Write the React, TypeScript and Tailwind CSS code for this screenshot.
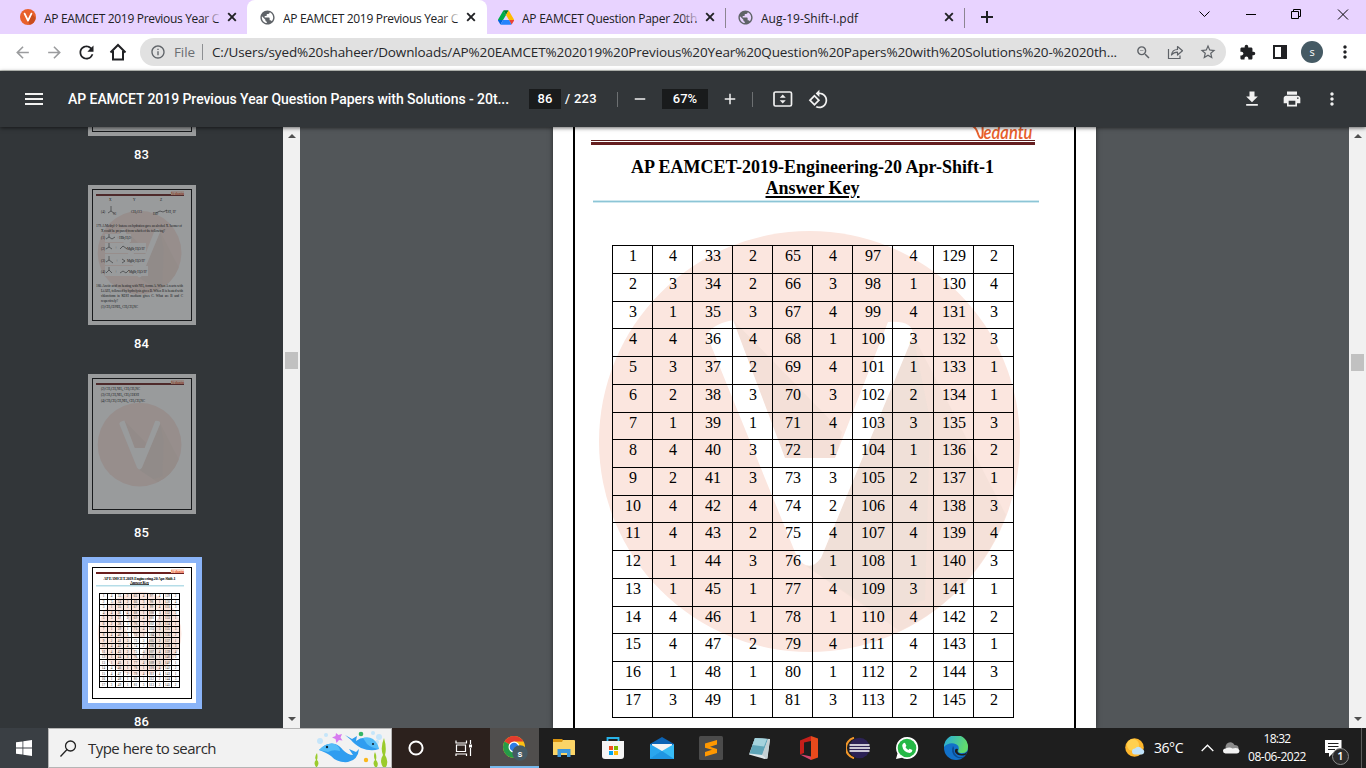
import React, { useLayoutEffect, useRef, useState } from "react";
import {
  MdArrowBack, MdArrowForward, MdRefresh, MdPublic, MdInfoOutline, MdStarBorder,
  MdExtension, MdMoreVert, MdMenu, MdRemove, MdAdd, MdFileDownload, MdPrint, MdZoomOut,
} from "react-icons/md";

/** One line of text whose letter spacing is adjusted so that it fills the given width. */
function Fit({ width, className = "", children }: { width: number; className?: string; children: string }) {
  const ref = useRef<HTMLSpanElement>(null);
  const [spacing, setSpacing] = useState(0);
  useLayoutEffect(() => {
    if (ref.current) {
      const natural = ref.current.getBoundingClientRect().width;
      setSpacing((width - natural) / children.length);
    }
  }, [width, children]);
  return (
    <span ref={ref} className={"inline-block shrink-0 whitespace-pre " + className} style={{ letterSpacing: spacing }}>
      {children}
    </span>
  );
}

const ui = "font-['Open_Sans','Noto_Sans',sans-serif]";

function DriveIcon() {
  return (
    <svg width="16" height="15" viewBox="0 0 87 78">
      <path fill="#0066da" d="m6.6 66.85 3.85 6.65c.8 1.4 1.95 2.5 3.3 3.3l13.75-23.8h-27.5c0 1.55.4 3.1 1.2 4.5z" />
      <path fill="#00ac47" d="m43.65 25-13.75-23.8c-1.35.8-2.5 1.9-3.3 3.3l-25.4 44a9.06 9.06 0 0 0 -1.2 4.5h27.5z" />
      <path fill="#ea4335" d="m73.55 76.8c1.35-.8 2.5-1.9 3.3-3.3l1.6-2.75 7.65-13.25c.8-1.4 1.2-2.95 1.2-4.5h-27.5l5.85 11.5z" />
      <path fill="#00832d" d="m43.65 25 13.75-23.8c-1.35-.8-2.9-1.2-4.5-1.2h-18.5c-1.6 0-3.15.45-4.5 1.2z" />
      <path fill="#2684fc" d="m59.8 53h-32.3l-13.75 23.8c1.35.8 2.9 1.2 4.5 1.2h50.8c1.6 0 3.15-.45 4.5-1.2z" />
      <path fill="#ffba00" d="m73.4 26.5-12.7-22c-.8-1.4-1.95-2.5-3.3-3.3l-13.75 23.8 16.15 28h27.45c0-1.55-.4-3.1-1.2-4.5z" />
    </svg>
  );
}

function VIcon() {
  return (
    <svg width="16" height="16" viewBox="0 0 16 16">
      <circle cx="8" cy="8" r="8" fill="#e8602c" />
      <path d="M8 12.5 L12 5 L15.6 9 A8 8 0 0 1 9.5 15.8z" fill="#c94d1e" />
      <path d="M4.6 4.6 L8 11.6 L11.4 4.6" stroke="#fff" strokeWidth="1.8" fill="none" strokeLinecap="round" strokeLinejoin="round" />
    </svg>
  );
}

function Tab({ icon, title, width, fade, className }: { icon: React.ReactNode; title: string; width: number; fade?: string; className: string }) {
  return (
    <div className={"relative flex h-[34px] shrink-0 items-center pl-3 " + className}>
      <span className="flex w-4 shrink-0 justify-center">{icon}</span>
      <div className="relative ml-2 w-[178px] overflow-hidden">
        <Fit width={width} className="text-[12px] leading-4 text-[#202124]">{title}</Fit>
        {fade && <div className={"absolute top-0 left-[158px] h-4 w-5 bg-gradient-to-r " + fade} />}
      </div>
      <svg className="ml-[5px] shrink-0" width="10" height="10" viewBox="0 0 10 10" fill="none" stroke="#202124" strokeWidth="1.9"><path d="M1.200 1.200L8.800 8.800M8.800 1.200L1.200 8.800" /></svg>
    </div>
  );
}

function TabStrip() {
  return (
    <div className="flex h-[34px] shrink-0 bg-[#e8d3ff]">
      <Tab icon={<VIcon />} title="AP EAMCET 2019 Previous Year C" width={175} fade="from-transparent to-[#e8d3ff]" className="ml-2 w-[239px]" />
      <Tab icon={<MdPublic size={17} className="shrink-0 text-[#5f6368]" />} title="AP EAMCET 2019 Previous Year C" width={175} fade="from-transparent to-white" className="w-[240px] rounded-t-lg bg-white" />
      <Tab icon={<DriveIcon />} title="AP EAMCET Question Paper 20th" width={175} fade="from-transparent to-[#e8d3ff]" className="ml-[-1px] w-[239px]" />
      <div className="mt-2 h-5 w-px bg-[#8c8591]" />
      <Tab icon={<MdPublic size={17} className="shrink-0 text-[#5f6368]" />} title="Aug-19-Shift-I.pdf" width={97} className="ml-[-1px] w-[239px]" />
      <div className="mt-2 h-5 w-px bg-[#8c8591]" />
      <svg className="mt-[11px] ml-[16px] shrink-0" width="12" height="12" viewBox="0 0 12 12"><path d="M5 0h2v5h5v2H7v5H5V7H0V5h5z" fill="#202124" /></svg>
      <svg className="ml-[203px] shrink-0" width="166" height="34" viewBox="0 0 166 34" fill="none" stroke="#000" strokeWidth="1">
        <path d="M3.5 11.5 l5 5 l5 -5" />
        <path d="M50 14.500h10" />
        <path d="M95.500 11.500h7v7h-7z M97.500 11v-1.500h7v7h-2" />
        <path d="M142 9.500l10 10M152 9.500l-10 10" />
      </svg>
    </div>
  );
}

function AddressBar() {
  return (
    <div className="flex h-[37px] shrink-0 items-center border-b border-[#c9ccc6] bg-white pl-[13px]">
      <MdArrowBack size={19} className="text-[#9b9c9e]" />
      <MdArrowForward size={19} className="ml-[13px] text-[#9b9c9e]" />
      <MdRefresh size={21} className="ml-[12px] text-[#202124]" />
      <svg className="ml-[11px]" width="20" height="20" viewBox="0 0 20 20" fill="none" stroke="#202124" strokeWidth="2">
        <path d="M2.500 10.500 L10 3 L17.500 10.500 M5 9v8.500h10V9" />
      </svg>
      <div className="ml-[12px] flex h-7 w-[1086px] items-center rounded-full bg-[#e1e1e1] pl-[10px]">
        <MdInfoOutline size={16} className="text-[#5f6368]" />
        <Fit width={21} className="ml-[8px] text-[13.500px] leading-5 text-[#6b6e72]">File</Fit>
        <div className="ml-[7px] h-4 w-px bg-[#8d8f92]" />
        <Fit width={905} className="ml-[9px] text-[13.500px] leading-5 text-[#26272a]">
          C:/Users/syed%20shaheer/Downloads/AP%20EAMCET%202019%20Previous%20Year%20Question%20Papers%20with%20Solutions%20-%2020th...
        </Fit>
        <MdZoomOut size={17} className="ml-[18px] shrink-0 text-[#5f6368]" />
        <svg className="ml-[15px] shrink-0" width="17" height="16" viewBox="0 0 17 16" fill="none" stroke="#5f6368" strokeWidth="1.200">
          <path d="M1.500 5v9.500h11.500v-3" />
          <path d="M4.500 11c.5-4 3-5.500 6-5.500V2.500L15.500 6.700L10.500 11V8.200C8 8.200 6 9 4.500 11z" strokeLinejoin="round" />
        </svg>
        <MdStarBorder size={18} className="ml-[15px] shrink-0 text-[#5f6368]" />
      </div>
      <MdExtension size={17} className="ml-[13px] text-[#202124]" />
      <svg className="ml-[17px]" width="14" height="14" viewBox="0 0 14 14"><path fillRule="evenodd" fill="#202124" d="M0 0h14v14H0z M2 2v10h6V2z" /></svg>
      <div className="ml-[14px] flex size-[22px] items-center justify-center rounded-full bg-[#455a64] text-[11px] font-medium text-white">s</div>
      <MdMoreVert size={20} className="ml-[12px] text-[#202124]" />
    </div>
  );
}

function PdfToolbar() {
  return (
    <div className="relative z-10 flex h-14 shrink-0 items-center bg-[#323639] pl-[22px] font-[Roboto,sans-serif] text-[#f1f1f1] shadow-[0_1px_4px_rgba(0,0,0,0.6)]">
      <MdMenu size={24} />
      <Fit width={441} className="ml-[22px] text-[14px] font-medium text-white">AP EAMCET 2019 Previous Year Question Papers with Solutions - 20t...</Fit>
      <div className="ml-[20px] flex h-5 w-8 items-center justify-center bg-[#191b1c] text-[13px] font-medium text-white">86</div>
      <Fit width={32} className="ml-[4px] text-[13px] font-medium text-white">/ 223</Fit>
      <div className="ml-[20px] h-[15px] w-px bg-[#6d7072]" />
      <MdRemove size={18} className="ml-[13px]" />
      <div className="ml-[13px] flex h-5 w-[46px] items-center justify-center bg-[#191b1c] text-[13px] font-medium text-white">67%</div>
      <MdAdd size={18} className="ml-[13px]" />
      <div className="ml-[13px] h-[15px] w-px bg-[#6d7072]" />
      <svg className="ml-[20px]" width="20" height="18" viewBox="0 0 20 18">
        <rect x="1" y="2" width="17.500" height="14" rx="1.500" fill="none" stroke="#f1f1f1" strokeWidth="1.700" />
        <path d="M9.750 4.500l3 3.200h-6z M9.750 13.500l3-3.200h-6z" fill="#f1f1f1" />
      </svg>
      <svg className="ml-[15px]" width="21" height="21" viewBox="0 0 24 24" fill="#f1f1f1">
        <path d="M7.340 6.410L.86 12.900l6.490 6.480 6.490-6.480-6.500-6.490zM3.690 12.900l3.660-3.660L11 12.900l-3.660 3.660-3.650-3.660zm15.670-6.260C17.610 4.880 15.300 4 13 4V.76L8.760 5 13 9.240V6c1.790 0 3.580.68 4.950 2.050 2.730 2.730 2.730 7.170 0 9.900C16.580 19.320 14.790 20 13 20c-.97 0-1.940-.21-2.840-.61l-1.490 1.490C10.020 21.620 11.510 22 13 22c2.300 0 4.610-.88 6.360-2.640 3.520-3.510 3.520-9.210 0-12.720z" />
      </svg>
      <div className="mr-[24px] ml-auto flex items-center gap-5">
        <MdFileDownload size={20} />
        <MdPrint size={20} />
        <MdMoreVert size={20} />
      </div>
    </div>
  );
}

function Watermark() {
  return (
    <g>
      <circle cx="809.500" cy="441.500" r="210.500" fill="#fbe6df" />
      <path d="M733 320 L842 432 L836 458 L785 460z" fill="#f4e0d8" />
      <path d="M913 335 L1006 515 A210 210 0 0 1 900 631 L806 566 L822 556z" fill="#f5e1d9" />
      <path d="M913 335 L930 420 L925 600 L880 615 L808 567 L822 556z" fill="#eddfd7" opacity="0.600" />
      <path d="M708 338 Q706 326 733 320 L785 458 H835 L888 322 Q914 320 913 336 L821 558 Q809 574 797 557z" fill="#fff" />
    </g>
  );
}

function ThumbFrame({ children, mark, logo = true }: { children?: React.ReactNode; mark: string; logo?: boolean }) {
  return (
    <svg width="108" height="140" viewBox="0 0 108 140" className="block bg-white font-['Liberation_Serif',serif]" fill="#000">
      <g transform={mark}><Watermark /></g>
      <rect x="4.500" y="4.500" width="99" height="131" fill="none" stroke="#000" />
      <rect x="8" y="9" width="88" height="2" fill="#6b1f1f" />
      {logo && (
        <g>
          <rect x="83" y="6" width="13" height="4" fill="#fbd9cb" />
          <text x="83" y="10" fontSize="5" fill="#e8602c" textLength="13" fontWeight="bold" lengthAdjust="spacingAndGlyphs">Vedantu</text>
        </g>
      )}
      {children}
    </svg>
  );
}

const answers = [
  ["1", "4", "33", "2", "65", "4", "97", "4", "129", "2"],
  ["2", "3", "34", "2", "66", "3", "98", "1", "130", "4"],
  ["3", "1", "35", "3", "67", "4", "99", "4", "131", "3"],
  ["4", "4", "36", "4", "68", "1", "100", "3", "132", "3"],
  ["5", "3", "37", "2", "69", "4", "101", "1", "133", "1"],
  ["6", "2", "38", "3", "70", "3", "102", "2", "134", "1"],
  ["7", "1", "39", "1", "71", "4", "103", "3", "135", "3"],
  ["8", "4", "40", "3", "72", "1", "104", "1", "136", "2"],
  ["9", "2", "41", "3", "73", "3", "105", "2", "137", "1"],
  ["10", "4", "42", "4", "74", "2", "106", "4", "138", "3"],
  ["11", "4", "43", "2", "75", "4", "107", "4", "139", "4"],
  ["12", "1", "44", "3", "76", "1", "108", "1", "140", "3"],
  ["13", "1", "45", "1", "77", "4", "109", "3", "141", "1"],
  ["14", "4", "46", "1", "78", "1", "110", "4", "142", "2"],
  ["15", "4", "47", "2", "79", "4", "111", "4", "143", "1"],
  ["16", "1", "48", "1", "80", "1", "112", "2", "144", "3"],
  ["17", "3", "49", "1", "81", "3", "113", "2", "145", "2"],
];
const shortRows = [2, 6, 9, 13];

const markLow = "translate(-109.500 -20.200) scale(0.199)";
const markMid = "translate(-109.500 -17.200) scale(0.199)";

function Thumb84() {
  return (
    <ThumbFrame mark={markLow}>
      <g fontSize="3.500">
        <text x="21" y="16">X</text><text x="45" y="16">Y</text><text x="72" y="16">Z</text>
        <text x="13" y="28">(4)</text><text x="43" y="28" textLength="11">CH₃CCl</text><text x="65" y="30">HO</text><text x="78" y="27.500">OH, H⁺</text><text x="25" y="30">Cl</text>
        <path d="M23 21v5l-3 2m3-2l4 3M68 28l4-2 3 1 4-2" fill="none" stroke="#222" strokeWidth="0.600" />
        <text x="8" y="42" textLength="86">179. A Methyl-1- butene on hydration gave an alcohol X. Isomer of</text>
        <text x="13" y="47" textLength="64">X could be prepared from which of the following?</text>
      </g>
      <rect x="17" y="49" width="26" height="8" fill="#fff" />
      <rect x="17" y="58" width="41" height="10" fill="#fff" />
      <rect x="17" y="69" width="41" height="11" fill="#fff" />
      <rect x="17" y="81" width="43" height="10" fill="#fff" />
      <path d="M18 54l3-2 3 2 3-2M21 52v-3M18 64l3-2 3 2M21 62v-4M32 64l3-3 4 3M18 77l3-2 4 3M21 75v-4M34 74l3 2-3 2M18 88l3-3 3 3M21 85v-3M32 88l3-2 3 2 3-3" fill="none" stroke="#222" strokeWidth="0.600" />
      <g fontSize="3.500">
        <text x="13" y="54">(1)</text><text x="29" y="54" textLength="14">+ HBr, H₂O</text>
        <text x="13" y="65">(2)</text><text x="27" y="64">+</text><text x="39" y="65" textLength="18">MgBr, H₂O/ H⁺</text>
        <text x="13" y="77">(3)</text><text x="28" y="77">+</text><text x="39" y="77" textLength="18">MgBr, H₂O/ H⁺</text>
        <text x="13" y="88">(4)</text><text x="27" y="88">+</text><text x="41" y="88" textLength="18">MgBr, H₂O/ H⁺</text>
        <text x="8" y="101.500" textLength="87">180. Acetic acid on heating with NH₃ forms A. When A reacts with</text>
        <text x="13" y="106.500" textLength="82">LiAlH₄ followed by hydrolysis gives B. When B is heated with</text>
        <text x="13" y="112" textLength="82" wordSpacing="1">chloroform in KOH medium gives C. What are B and C</text>
        <text x="13" y="117" textLength="17">respectively?</text>
        <text x="13" y="123" textLength="37">(1) CH₃CONH₂, CH₃CH₂NC</text>
      </g>
    </ThumbFrame>
  );
}

function Thumb85() {
  return (
    <ThumbFrame mark={markMid}>
      <g fontSize="3.500">
        <text x="13" y="16" textLength="39">(2) CH₃CH₂NH₂, CH₃CH₂NC</text>
        <text x="13" y="22" textLength="38">(3) CH₃CH₂NH₂, CH₃COOH</text>
        <text x="13" y="28" textLength="44">(4) CH₃CH₂CH₂NH₂, CH₃CH₂NC</text>
      </g>
    </ThumbFrame>
  );
}

function Thumb86() {
  return (
    <ThumbFrame mark={markMid}>
      <g fontSize="4" fontWeight="bold">
        <text x="15.500" y="16.500" textLength="72">AP EAMCET-2019-Engineering-20 Apr-Shift-1</text>
        <text x="42" y="20.500" textLength="19">Answer Key</text>
      </g>
      <rect x="42" y="21" width="19" height="0.700" />
      <rect x="8" y="22" width="88" height="1.500" fill="#b5dde8" />
      {answers.map((row, r) => row.map((v, c) => (
        <text key={r + "-" + c} x={15.5 + c * 8} y={34.3 + r * 5.53} fontSize="3.300" fill="#333" textAnchor="middle">{v}</text>
      )))}
      {Array.from({ length: 18 }, (_, i) => <rect key={i} x="11" y={Math.round(30 + i * 5.53)} width="81" height="1" />)}
      {Array.from({ length: 11 }, (_, i) => <rect key={i} x={11 + i * 8} y="30" width="1" height="95" />)}
    </ThumbFrame>
  );
}

function Scrollbar({ handle }: { handle: string }) {
  return (
    <div className="flex w-[17px] shrink-0 flex-col items-center bg-[#f1f1f1]">
      <svg className="mt-[5px] shrink-0" width="8" height="6" viewBox="0 0 8 6"><path d="M0 6 L4 2 L8 6z" fill="#505050" /></svg>
      <div className={"w-[13px] shrink-0 bg-[#c1c1c1] " + handle} />
      <svg className="mt-auto mb-[6px] shrink-0" width="8" height="6" viewBox="0 0 8 6"><path d="M0 1 L4 5 L8 1z" fill="#505050" /></svg>
    </div>
  );
}

function ThumbItem({ label, selected, children }: { label: string; selected?: boolean; children?: React.ReactNode }) {
  return (
    <div className="flex h-[189px] shrink-0 flex-col items-center">
      {selected
        ? <div className="z-10 -mt-[6px] border-[6px] border-[#8ab4f8]">{children}</div>
        : <div className="opacity-50">{children}</div>}
      <div className={"text-[13px] leading-4 font-medium text-white " + (selected ? "mt-[5px]" : "mt-[11px]")}>{label}</div>
    </div>
  );
}

function Sidebar() {
  return (
    <div className="flex w-[283px] shrink-0 flex-col overflow-hidden bg-[#323639] font-[Roboto,sans-serif]">
      <div className="-mt-[131px] flex flex-col">
        <ThumbItem label="83"><ThumbFrame mark={markMid} logo={false} /></ThumbItem>
        <ThumbItem label="84"><Thumb84 /></ThumbItem>
        <ThumbItem label="85"><Thumb85 /></ThumbItem>
        <ThumbItem label="86" selected><Thumb86 /></ThumbItem>
      </div>
    </div>
  );
}

function DocumentPage() {
  return (
    <div className="relative h-[601px] w-[543px] overflow-hidden bg-white px-5 font-['Liberation_Serif',serif] text-black shadow-[0_0_5px_rgba(0,0,0,0.500)]">
      <svg className="absolute top-0 left-0" width="543" height="601" viewBox="553 127 543 601">
        <Watermark />
      </svg>
      <div className="relative flex h-full flex-col border-x-2 border-black">
        <svg className="ml-[396px] block h-[13px] w-[66px] shrink-0" viewBox="0 0 66 13">
          <text x="12.500" y="12" fontSize="20" textLength="49" lengthAdjust="spacingAndGlyphs" fill="#e8602c" fontFamily="Lato" fontStyle="italic" fontWeight="600">edantu</text>
          <path d="M1.500 -1 Q5 0 7.500 8 Q9 12 11 10.500 Q12 9 11.500 -1" fill="none" stroke="#e8602c" strokeWidth="2" />
        </svg>
        <div className="ml-4 h-px w-[444px] shrink-0 bg-[#5e1d1d]" />
        <div className="mt-px ml-4 h-[3px] w-[444px] shrink-0 bg-[#651f20]" />
        <div className="mt-[12px] ml-[56px] flex w-[363px] shrink-0 flex-col items-center text-[18px] leading-[21px] font-bold">
          <Fit width={363}>AP EAMCET-2019-Engineering-20 Apr-Shift-1</Fit>
          <Fit width={94} className="underline decoration-2 underline-offset-2">Answer Key</Fit>
        </div>
        <div className="mt-[1px] ml-[18px] h-[3px] w-[446px] shrink-0 border-y border-[#cfe8ef] bg-[#8cc5d6]" />
        <div className="mt-[42px] ml-[37px] w-[402px] shrink-0 border-t border-l border-black">
          {answers.map((row, r) => (
            <div key={r} className={"flex " + (shortRows.includes(r) ? "h-[27px]" : "h-7")}>
              {row.map((v, c) => (
                <div key={c} className={"box-border border-r border-b border-black pl-px text-center text-[16px] leading-[20px] " + (c === 7 ? "w-[41px]" : "w-[40px]")}>{v}</div>
              ))}
            </div>
          ))}
        </div>
      </div>
    </div>
  );
}

function Dolphins() {
  return (
    <svg width="78" height="38" viewBox="0 0 78 38">
      <g fill="#c5e5fa"><circle cx="7" cy="12" r="3" /><circle cx="13" cy="6" r="2" /><circle cx="60" cy="4" r="2" /><circle cx="66" cy="8" r="3" /><circle cx="64" cy="13" r="2" /></g>
      <path d="M23 4l2.500 2 3.500-1-1.500 3.500 2 3-3.500-.500-2.500 3-1-4-3.500-1.500 3.500-1.500z" fill="#d77bf0" />
      <circle cx="48" cy="5" r="2.300" fill="#35b566" />
      <circle cx="53" cy="31" r="2.200" fill="#fbb81c" />
      <path d="M6 21 Q14 13 22 15 Q26 16 30 21 Q35 26 40 26 L36 20 L43 23 L46 20 Q45 31 35 33 Q24 34 18 27 Q14 24 6 21z" fill="#2f9df0" />
      <path d="M6 21 Q14 13 22 15 Q27 18 27 22 Q20 20 15 23z" fill="#55bdf8" />
      <path d="M32 6l7 4 5-3 -1 5 Q48 8 54 9 Q62 11 66 20 Q58 23 48 19 Q41 15 38 11z" fill="#2f9df0" />
      <path d="M50 9q5-2 10 1 5 4 6 10-8-1-12-5z" fill="#55bdf8" />
      <circle cx="14" cy="18" r="1.200" fill="#123" /><circle cx="60" cy="15" r="1.100" fill="#123" />
      <path d="M3 38q-3-4 0-7 -2-3 1-7 1 4 0 7 3 3 0 7zM62 38q-3-4 0-7-2-4 0-8 2 4 1 8 3 3 1 7zM70 38q-4-6 0-12-3-7 1-17 3 10 1 17 4 6 1 12z" fill="#9acb2c" />
    </svg>
  );
}

function TaskIcon({ children, active }: { children: React.ReactNode; active?: boolean }) {
  return (
    <div className={"flex h-10 w-[49px] shrink-0 items-center justify-center " + (active ? "border-b-2 border-[#76b9ed] bg-[#504e4d] pt-0.5" : "")}>{children}</div>
  );
}

function Taskbar() {
  return (
    <div className={"flex h-10 shrink-0 items-center bg-[#1e1e1e] text-white " + ui}>
      <div className="flex h-10 w-12 items-center justify-center bg-[#3a3f44]">
        <svg width="16" height="16" viewBox="0 0 16 16" fill="#fff"><path d="M0 2.300L6.500 1.400V7.600H0zM7.300 1.300L16 0V7.600H7.300zM0 8.400H6.500V14.600L0 13.700zM7.300 8.400H16V16L7.300 14.700z" /></svg>
      </div>
      <div className="flex h-10 w-[344px] items-center border border-[#b5b5b5] bg-[#f2f2f2] pl-[11px]">
        <svg width="17" height="17" viewBox="0 0 17 17" fill="none" stroke="#222" strokeWidth="1.300"><circle cx="10.500" cy="6" r="5" /><path d="M7 9.500L.5 16.500" /></svg>
        <Fit width={128} className="ml-[11px] text-[15px] leading-5 text-[#2c2c2c]">Type here to search</Fit>
        <div className="ml-auto"><Dolphins /></div>
      </div>
      <div className="flex h-10 w-[98px] items-center bg-[#2c211d]">
        <svg className="ml-4" width="16" height="16" viewBox="0 0 16 16"><circle cx="8" cy="8" r="6.600" fill="none" stroke="#fff" strokeWidth="2" /></svg>
        <svg className="ml-[31px]" width="18" height="16" viewBox="0 0 18 16" fill="none" stroke="#fff" strokeWidth="1.200"><path d="M1.500 5h9v6.500h-9zM1 .5V3h10.500V.5M1 16v-2h10.500V16M15.500 0v4M15.500 8v8" /><path d="M14 4.500h3v3h-3z" fill="#fff" stroke="none" /></svg>
      </div>
      <TaskIcon active>
        <svg width="26" height="26" viewBox="0 0 26 26">
          <circle cx="12" cy="12" r="11" fill="#fbc116" />
          <path d="M12 12L2.500 6.500A11 11 0 0 1 21.500 6.500H12z" fill="#e33b2e" />
          <path d="M12 12L2.500 6.500A11 11 0 0 0 12 23L17 14.500z" fill="#259b48" />
          <circle cx="12" cy="12" r="5.500" fill="#fff" /><circle cx="12" cy="12" r="4.300" fill="#2c7ce5" />
          <circle cx="18" cy="18" r="7.700" fill="#455a64" />
          <text x="18" y="21.500" fontSize="9.500" fontFamily="Roboto" fontWeight="500" textAnchor="middle" fill="#fff">s</text>
        </svg>
      </TaskIcon>
      <TaskIcon>
        <svg width="22" height="20" viewBox="0 0 22 20"><path d="M0 1h9l2 2v4H0z" fill="#d99410" /><path d="M0 4h9l1-2h11a1 1 0 0 1 1 1v14H0z" fill="#fbd467" /><path d="M4.500 19v-8h13v8h-3.500v-4h-6v4z" fill="#3e97dc" /></svg>
      </TaskIcon>
      <TaskIcon>
        <svg width="24" height="24" viewBox="0 0 24 24"><path d="M6.500 6V2h11v4" fill="none" stroke="#28b3e8" strokeWidth="1.800" /><path d="M1 5h22v15a3 3 0 0 1-3 3H4a3 3 0 0 1-3-3z" fill="#f5f5f5" /><path d="M8 10h4v4H8z" fill="#f05022" /><path d="M13 10h4v4h-4z" fill="#7fba00" /><path d="M8 15h4v4H8z" fill="#00a4ef" /><path d="M13 15h4v4h-4z" fill="#ffb900" /></svg>
      </TaskIcon>
      <TaskIcon>
        <svg width="24" height="22" viewBox="0 0 24 22"><path d="M0 7L12 0l12 7v15H0z" fill="#0c63b4" /><path d="M2 7h20v7H2z" fill="#f4f4f4" /><path d="M0 7l12 7L0 22z" fill="#2aa6ee" /><path d="M24 7v15H0l12-8z" fill="#38bcf5" /><path d="M24 22H0l12-8z" fill="#1f96e3" /></svg>
      </TaskIcon>
      <TaskIcon>
        <svg width="24" height="24" viewBox="0 0 24 24"><rect width="24" height="24" rx="1.500" fill="#4b4b4b" /><path d="M6 7.500L18 4v4.500L11 10.700L18 13v4L6 20.500V16l7-2.200L6 11.700z" fill="#ff9800" /></svg>
      </TaskIcon>
      <TaskIcon>
        <svg width="24" height="24" viewBox="0 0 24 24"><path d="M7 2l15 1-2.500 19.500-3 .500L1 18.500z" fill="#dfe7ea" /><path d="M7 2l13 1-5.500 16L1.500 17.500z" fill="#5fa5b8" /><path d="M7 2l12 1-3 7.500L4.500 9z" fill="#a5d3dd" /><path d="M20 3l2 1-3 19-5-4z" fill="#c3d0d4" /></svg>
      </TaskIcon>
      <TaskIcon>
        <svg width="20" height="24" viewBox="0 0 20 24"><path d="M12 0l7 2.500v19L12 24z" fill="#e84a1c" /><path d="M12 0L1 4.500v14L5 17V6.500L12 5z" fill="#c51f1a" /><path d="M1 18.500L12 24v-3.500L5 19z" fill="#d4436b" /></svg>
      </TaskIcon>
      <TaskIcon>
        <svg width="24" height="22" viewBox="0 0 24 22"><path d="M8 0.800A10.500 10.500 0 0 0 8 21.200" fill="none" stroke="#f4982a" strokeWidth="2" /><circle cx="13.500" cy="11" r="10.300" fill="#2c2255" /><path d="M3.500 8h20M3.500 11h20.500M3.500 14h20" stroke="#fff" strokeWidth="1.500" /></svg>
      </TaskIcon>
      <TaskIcon>
        <div className="relative flex size-6 items-center justify-center">
          <svg className="absolute inset-0" width="24" height="24" viewBox="0 0 24 24"><path d="M12 1A11 11 0 1 1 7 21.700L1 23L2.500 17.500A11 11 0 0 1 12 1z" fill="#fff" /><circle cx="12" cy="12" r="9.300" fill="#25b846" /></svg>
          <svg className="relative" width="14" height="14" viewBox="0 0 14 14"><path d="M3.500 2.200l1.400-.4 1.500 3-.9 1.400q1 1.900 2.900 2.700l1.200-1.200 2.800 1.400q0 2.500-2.600 2.800Q3 11 2.200 4.700q.2-1.700 1.300-2.500z" fill="#fff" /></svg>
        </div>
      </TaskIcon>
      <TaskIcon>
        <svg width="24" height="24" viewBox="0 0 24 24">
          <defs><linearGradient id="edge" x1="0" y1="0" x2="1" y2="0.300"><stop offset="0" stopColor="#25a9e0" /><stop offset="1" stopColor="#62dc6c" /></linearGradient></defs>
          <circle cx="12" cy="12" r="12" fill="#1271c9" />
          <path d="M0 11A12 12 0 0 1 24 11Q24 17 18 17Q13 17 14.500 14Q16 9 10 7.500Q4 6.500 0 11z" fill="url(#edge)" />
          <path d="M9 10Q6 17 12 21Q17 24 21 20Q15 23 12 19Q9 16 10 12z" fill="#0b4a91" />
          <path d="M14 13Q12 17 17 18Q21 18.500 23.500 15.500L21.500 19Q14 21 11 16Q10.500 12 14 13z" fill="#1e1e1e" />
        </svg>
      </TaskIcon>
      <svg className="ml-[145px] shrink-0" width="20" height="20" viewBox="0 0 20 20"><circle cx="9.500" cy="9.500" r="9.300" fill="#fdb62c" /><circle cx="8" cy="7" r="6" fill="#ffd050" /><path d="M10 16.500a3 3 0 0 1 0-6 4 4 0 0 1 7 .500 2.800 2.800 0 0 1 0 5.500z" fill="#c0e2fa" /></svg>
      <Fit width={29} className="ml-[9px] text-[14px] leading-5">36°C</Fit>
      <svg className="ml-[18px] shrink-0" width="13" height="8" viewBox="0 0 13 8" fill="none" stroke="#fff" strokeWidth="1.300"><path d="M.7 7L6.500 1.200L12.300 7" /></svg>
      <svg className="ml-[9px] shrink-0" width="17" height="12" viewBox="0 0 17 12"><path d="M3 7a4.500 4.500 0 0 1 8.500-4q4.500 0 4 4z" fill="#8b8b8b" /><path d="M2.500 11.500a2.500 2.500 0 0 1 0-5q4-2 7 0 6-1.500 7 2 0 3-3 3z" fill="#f2f2f2" /></svg>
      <div className="ml-[7px] flex w-[60px] shrink-0 flex-col items-center text-[12px] leading-[18px]">
        <Fit width={27}>18:32</Fit>
        <Fit width={58}>08-06-2022</Fit>
      </div>
      <div className="relative mt-[7px] ml-[18px] h-6 w-6 shrink-0">
        <svg width="17" height="18" viewBox="0 0 17 18"><path d="M0 0h16.500v13H8l-4 4v-4H0z" fill="#fff" /><path d="M3 3.500h10.500M3 6.500h10.500M3 9.500h7" stroke="#1e1e1e" /></svg>
        <div className="absolute top-[8px] left-[7px] flex size-[17px] items-center justify-center rounded-full border border-[#8b8b8b] bg-[#2b2b2b] text-[11px] font-semibold">1</div>
      </div>
      <div className="mr-[4px] ml-auto h-10 w-px bg-[#5c5c5c]" />
    </div>
  );
}

export default function App() {
  return (
    <div className={"flex h-[768px] w-[1366px] flex-col overflow-hidden bg-white " + ui}>
      <TabStrip />
      <AddressBar />
      <PdfToolbar />
      <div className="flex h-[601px] shrink-0 overflow-hidden">
        <Sidebar />
        <Scrollbar handle="mt-[214px] h-[17px]" />
        <div className="flex w-[1049px] shrink-0 bg-[#525659] pl-[253px]">
          <DocumentPage />
        </div>
        <Scrollbar handle="mt-[216px] h-[17px]" />
      </div>
      <Taskbar />
    </div>
  );
}
